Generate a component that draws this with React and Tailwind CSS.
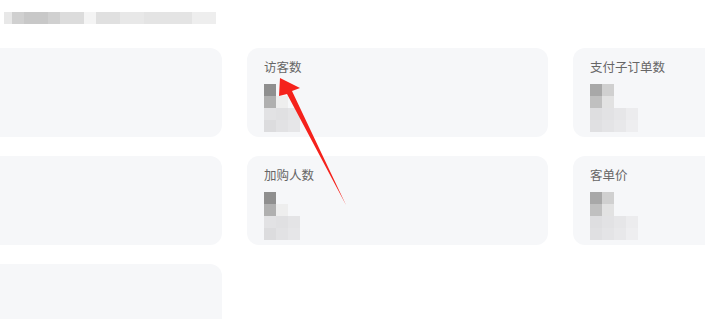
import React from "react";

function Mosaic({ rows }) {
  return (
    <div className="flex flex-col blur-[0.6px]">
      {rows.map((r, i) => (
        <div key={i} className="flex">
          {r.map((c, j) => (
            <div key={j} className="w-[12px] h-[12px]" style={{ background: c }} />
          ))}
        </div>
      ))}
    </div>
  );
}

const m1 = [
  ["#8f8f8f", "#f6f7f9"],
  ["#b0b0b0", "#eeeeee"],
  ["#e2e2e4", "#e0e0e2", "#e4e4e6"],
  ["#dcdcde", "#e2e2e4", "#e6e6e8"],
];
const m2 = [
  ["#a8a8a8", "#d0d0d0"],
  ["#c0c0c0", "#e2e2e2"],
  ["#dedee0", "#e2e2e4", "#e6e6e8", "#ececee"],
  ["#e0e0e2", "#e4e4e6", "#e8e8ea", "#eeeef0"],
];

function Card({ label, mosaic }) {
  return (
    <div className="w-[301px] h-[89px] shrink-0 rounded-[12px] bg-[#f6f7f9] pl-[17px] pt-[11px]">
      {label && (
        <div className="text-[12.5px] leading-[16px] text-[#666]">{label}</div>
      )}
      {mosaic && <div className="mt-[9px]">{<Mosaic rows={mosaic} />}</div>}
    </div>
  );
}

export default function App() {
  const header = [
    ["#e8e8e8", 8], ["#d0d0d0", 12], ["#c8c8c8", 24], ["#d0d0d0", 12], ["#dcdcdc", 24],
    ["#f4f4f4", 12], ["#e0e0e0", 24], ["#e8e8e8", 24], ["#e4e4e4", 48], ["#eeeeee", 24],
  ];
  return (
    <div
      className="relative w-[705px] h-[319px] overflow-hidden bg-white"
      style={{ fontFamily: '"Noto Sans CJK SC", "Noto Sans", sans-serif' }}
    >
      <div className="flex pl-[4px] pt-[12px] h-[24px] box-content blur-[0.5px]">
        {header.map(([c, w], i) => (
          <div key={i} className="h-[12px]" style={{ background: c, width: w }} />
        ))}
      </div>
      <div className="ml-[-79px] mt-[12px] flex flex-col gap-[19px]">
        <div className="flex gap-[25px]">
          <Card />
          <Card label="访客数" mosaic={m1} />
          <Card label="支付子订单数" mosaic={m2} />
        </div>
        <div className="flex gap-[25px]">
          <Card />
          <Card label="加购人数" mosaic={m1} />
          <Card label="客单价" mosaic={m2} />
        </div>
        <div className="flex gap-[25px]">
          <Card />
        </div>
      </div>
      <svg className="absolute left-0 top-0" width="705" height="319" viewBox="0 0 705 319">
        <polygon
          points="280,78 300,88 292,91 346,205 287,94 279,96"
          fill="#f5221c"
        />
      </svg>
    </div>
  );
}
